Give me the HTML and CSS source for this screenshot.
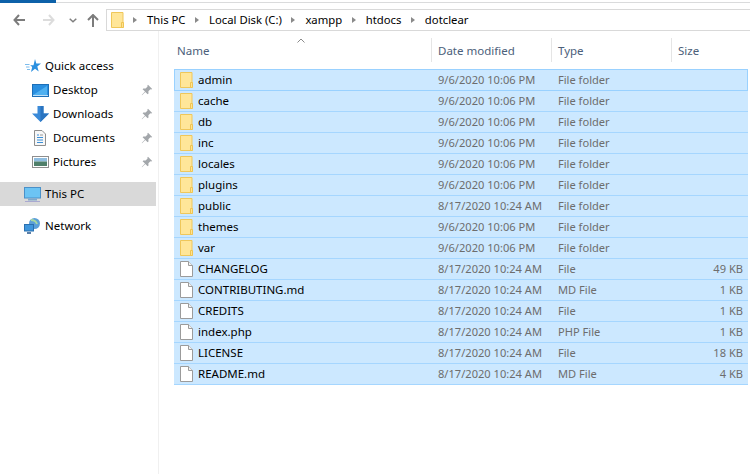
FILE: index.html
```html
<!DOCTYPE html>
<html lang="en">
<head>
    <meta charset="UTF-8">
    <title>dotclear</title>
    <link rel="stylesheet" href="styles.css">
</head>
<body>
    <svg class="defs" width="0" height="0">
        <symbol id="folder" viewBox="0 0 13 16">
            <path d="M.5.5h11.500v15H.5z" fill="#ffe699" stroke="#efc75a"/>
            <path d="M10.500 10.500h2v5h-2z" fill="#ffe38f" stroke="#efc453"/>
        </symbol>
        <symbol id="file" viewBox="0 0 13 16">
            <path d="M.5.5h8l4 4v11H.5z" fill="#fff" stroke="#9b9b9b"/>
            <path d="M8.500.5v4h4" fill="#f2f2f2" stroke="#9b9b9b"/>
        </symbol>
        <symbol id="pin" viewBox="0 0 12 12">
            <path d="M7 .8l4.200 4.200-1 .6-.8-.3-2 2 .1 2.200-.8.800L4.300 7.900 1 11.200l-.3-.3L4 7.600 1.600 5.300l.8-.8 2.200.1 2-2-.3-.8z" fill="#a3a7ab"/>
        </symbol>
    </svg>

    <div class="ribbon"><div class="ribbon-tab"></div></div>

    <div class="toolbar">
        <div class="nav-buttons">
            <svg width="12" height="12" viewBox="0 0 12 12"><path d="M6 1L1.500 6 6 11M2 6h10" fill="none" stroke="#7c7c7c" stroke-width="2"/></svg>
            <svg class="nav-forward" width="12" height="12" viewBox="0 0 12 12"><path d="M6 1l4.500 5L6 11M10 6H0" fill="none" stroke="#dcdcdc" stroke-width="2"/></svg>
            <svg class="nav-down" width="8" height="5" viewBox="0 0 8 5"><path d="M.7.7L4 3.800 7.300.7" fill="none" stroke="#808080" stroke-width="1.500"/></svg>
            <svg class="nav-up" width="12" height="13" viewBox="0 0 12 13"><path d="M1 6l5-5 5 5M6 1.500V13" fill="none" stroke="#7c7c7c" stroke-width="2"/></svg>
        </div>
        <div class="address">
            <svg class="address-icon" width="13" height="16"><use href="#folder"/></svg>
            <span class="crumb-sep"></span><span>This PC</span>
            <span class="crumb-sep"></span><span>Local Disk (C:)</span>
            <span class="crumb-sep"></span><span>xampp</span>
            <span class="crumb-sep"></span><span>htdocs</span>
            <span class="crumb-sep"></span><span>dotclear</span>
        </div>
    </div>

    <div class="main">
        <nav class="sidebar">
            <div class="nav-item top">
                <svg width="17" height="14" viewBox="0 0 17 14"><path d="M11 0l1.300 4.500H17l-3.700 3 1.400 5L11 9.800 7 13l1.200-5-2-1.800h3.300z" fill="#2b90e0"/><path d="M1 5.500h4.500M2 8h3.500M3 10.500h3" stroke="#7dbcec"/></svg>
                Quick access
            </div>
            <div class="nav-item sub">
                <svg width="17" height="13" viewBox="0 0 17 13"><rect x=".5" y=".5" width="16" height="12" fill="#2a8fe0" stroke="#1c6fb8"/><path d="M1 11L15 2v9z" fill="#4fb0f0"/><path d="M1 11.500h15" stroke="#bfe0f8"/></svg>
                Desktop
                <svg class="pin" width="12" height="12"><use href="#pin"/></svg>
            </div>
            <div class="nav-item sub">
                <svg width="17" height="16" viewBox="0 0 17 16"><path d="M5.500 0h6v7.500H17L8.500 16 0 7.500h5.500z" fill="#3a8ad8"/><path d="M8.500 0h3v7.500H17L8.500 16z" fill="#2a74c0"/></svg>
                Downloads
                <svg class="pin" width="12" height="12"><use href="#pin"/></svg>
            </div>
            <div class="nav-item sub">
                <svg class="doc-icon" width="12" height="16" viewBox="0 0 12 16"><path d="M.5.500h7.500l3.500 3.500v11.500H.5z" fill="#f7f7f7" stroke="#8e8e8e"/><path d="M3 5h2M3 7.500h6M3 10h6M3 12.500h6" stroke="#3a8fd8"/><path d="M6 5h3" stroke="#9a9a9a"/></svg>
                Documents
                <svg class="pin" width="12" height="12"><use href="#pin"/></svg>
            </div>
            <div class="nav-item sub">
                <svg width="17" height="12" viewBox="0 0 17 12"><rect x=".5" y=".5" width="16" height="11" fill="#fff" stroke="#8e8e8e"/><path d="M2 2h13v3.500H2z" fill="#8fbde0"/><path d="M2 5.500h13V10H2z" fill="#4f7f6a"/></svg>
                Pictures
                <svg class="pin" width="12" height="12"><use href="#pin"/></svg>
            </div>
            <div class="nav-item top section active">
                <svg width="17" height="15" viewBox="0 0 17 15"><rect x=".5" y=".5" width="16" height="10.500" fill="#6cc4f4" stroke="#4a90c8"/><path d="M4 12.500h9" stroke="#7fa8cc" stroke-width="2"/><path d="M1 14.500h15" stroke="#a9a9d0"/></svg>
                This PC
            </div>
            <div class="nav-item top section">
                <svg width="17" height="16" viewBox="0 0 17 16"><circle cx="10.500" cy="5.500" r="5.500" fill="#5b9fd8"/><path d="M7 2c3 0 5 1 6 4" stroke="#a8d8a0" stroke-width="2" fill="none"/><rect x=".5" y="6.500" width="9" height="6.500" fill="#3f96dc" stroke="#2a70b0"/><path d="M3 15h4" stroke="#5a7fa8" stroke-width="2"/></svg>
                Network
            </div>
        </nav>

        <section class="files">
            <div class="header">
                <div class="col-head">Name<svg class="sort-arrow" width="8" height="5" viewBox="0 0 8 5"><path d="M.5 4.500L4 1l3.500 3.500" fill="none" stroke="#8a8a8a"/></svg></div>
                <div class="col-head">Date modified</div>
                <div class="col-head">Type</div>
                <div class="col-head">Size</div>
            </div>

            <div class="row first"><div class="name"><svg width="13" height="16"><use href="#folder"/></svg>admin</div><div>9/6/2020 10:06 PM</div><div>File folder</div><div class="size"></div></div>
            <div class="row"><div class="name"><svg width="13" height="16"><use href="#folder"/></svg>cache</div><div>9/6/2020 10:06 PM</div><div>File folder</div><div class="size"></div></div>
            <div class="row"><div class="name"><svg width="13" height="16"><use href="#folder"/></svg>db</div><div>9/6/2020 10:06 PM</div><div>File folder</div><div class="size"></div></div>
            <div class="row"><div class="name"><svg width="13" height="16"><use href="#folder"/></svg>inc</div><div>9/6/2020 10:06 PM</div><div>File folder</div><div class="size"></div></div>
            <div class="row"><div class="name"><svg width="13" height="16"><use href="#folder"/></svg>locales</div><div>9/6/2020 10:06 PM</div><div>File folder</div><div class="size"></div></div>
            <div class="row"><div class="name"><svg width="13" height="16"><use href="#folder"/></svg>plugins</div><div>9/6/2020 10:06 PM</div><div>File folder</div><div class="size"></div></div>
            <div class="row"><div class="name"><svg width="13" height="16"><use href="#folder"/></svg>public</div><div>8/17/2020 10:24 AM</div><div>File folder</div><div class="size"></div></div>
            <div class="row"><div class="name"><svg width="13" height="16"><use href="#folder"/></svg>themes</div><div>9/6/2020 10:06 PM</div><div>File folder</div><div class="size"></div></div>
            <div class="row"><div class="name"><svg width="13" height="16"><use href="#folder"/></svg>var</div><div>9/6/2020 10:06 PM</div><div>File folder</div><div class="size"></div></div>
            <div class="row"><div class="name"><svg width="13" height="16"><use href="#file"/></svg>CHANGELOG</div><div>8/17/2020 10:24 AM</div><div>File</div><div class="size">49 KB</div></div>
            <div class="row"><div class="name"><svg width="13" height="16"><use href="#file"/></svg>CONTRIBUTING.md</div><div>8/17/2020 10:24 AM</div><div>MD File</div><div class="size">1 KB</div></div>
            <div class="row"><div class="name"><svg width="13" height="16"><use href="#file"/></svg>CREDITS</div><div>8/17/2020 10:24 AM</div><div>File</div><div class="size">1 KB</div></div>
            <div class="row"><div class="name"><svg width="13" height="16"><use href="#file"/></svg>index.php</div><div>8/17/2020 10:24 AM</div><div>PHP File</div><div class="size">1 KB</div></div>
            <div class="row"><div class="name"><svg width="13" height="16"><use href="#file"/></svg>LICENSE</div><div>8/17/2020 10:24 AM</div><div>File</div><div class="size">18 KB</div></div>
            <div class="row"><div class="name"><svg width="13" height="16"><use href="#file"/></svg>README.md</div><div>8/17/2020 10:24 AM</div><div>MD File</div><div class="size">4 KB</div></div>
        </section>
    </div>
</body>
</html>
```

FILE: styles.css
```css
html, body {
    margin: 0;
    height: 100%;
    overflow: hidden;
}
body {
    font-family: "Noto Sans", "Open Sans", sans-serif;
    font-size: 11.5px;
    color: #000;
    background: #fff;
}
.defs {
    display: block;
}
.ribbon {
    height: 2px;
    border-bottom: 1px solid #dadbdc;
}
.ribbon-tab {
    width: 56px;
    height: 3px;
    background: #0d61a9;
}
.toolbar {
    display: flex;
    height: 28px;
    padding-top: 6px;
    box-sizing: border-box;
}
.nav-buttons {
    display: flex;
    align-items: center;
    width: 106px;
    padding-left: 13px;
    box-sizing: border-box;
    height: 22px;
}
.nav-forward {
    margin-left: 18px;
}
.nav-down {
    margin-left: 14px;
}
.nav-up {
    margin-left: 10px;
}
.address {
    flex: 1;
    display: flex;
    align-items: center;
    height: 22px;
    box-sizing: border-box;
    border: 1px solid #d9d9d9;
    border-right: none;
    padding-left: 4px;
    font-size: 11.3px;
    line-height: 20px;
}
.crumb-sep {
    width: 0;
    height: 0;
    margin: 0 10px 0 9.5px;
    border-left: 4px solid #8a8a8a;
    border-top: 3px solid transparent;
    border-bottom: 3px solid transparent;
}
.address-icon + .crumb-sep {
    margin-left: 9px;
}
.main {
    display: flex;
    height: 444px;
}
.sidebar {
    width: 159px;
    flex: none;
    box-sizing: border-box;
    padding: 23px 0 0;
    border-right: 1px solid #f0f0f0;
}
.nav-item {
    position: relative;
    display: flex;
    align-items: center;
    width: 156px;
    height: 24px;
    padding-bottom: 2px;
    box-sizing: border-box;
}
.nav-item svg {
    margin-top: 2px;
}
.nav-item.top {
    padding-left: 24px;
    gap: 4px;
}
.nav-item.top svg {
    flex: none;
}
.nav-item.sub {
    padding-left: 32px;
    gap: 4px;
}
.nav-item.section {
    margin-top: 8px;
}
.nav-item.active {
    background: #d9d9d9;
}
.nav-item .doc-icon {
    margin: 2px 3px 0 2px;
}
.nav-item .pin {
    position: absolute;
    right: 3px;
    top: 6px;
    margin: 0;
}
.files {
    flex: 1;
    padding: 7px 2px 0 15px;
    min-width: 0;
}
.header,
.row {
    display: grid;
    grid-template-columns: 258px 120px 120px 1fr;
}
.header {
    height: 31px;
    align-items: stretch;
}
.col-head {
    position: relative;
    display: flex;
    align-items: center;
    height: 24px;
    padding-left: 3px;
    border-right: 1px solid #e5e5e5;
    color: #4c607a;
    box-sizing: border-box;
}
.col-head:nth-child(n+2) {
    padding-left: 6px;
}
.col-head:last-child {
    border-right: none;
}
.sort-arrow {
    position: absolute;
    left: 123px;
    top: 0;
}
.row {
    height: 21px;
    box-sizing: border-box;
    align-items: center;
    background: #cce8ff;
    border-bottom: 1px solid #a5d6ff;
    color: #6d6d6d;
    font-size: 11.1px;
    line-height: 20px;
}
.row.first {
    height: 22px;
    grid-template-columns: 257px 120px 120px 1fr;
    border: 1px solid #99d1ff;
}
.row > div:nth-child(n+2) {
    padding-left: 6px;
}
.row .name {
    display: flex;
    align-items: center;
    gap: 5px;
    padding-left: 6px;
    color: #000;
    font-size: 11.5px;
}
.row.first .name {
    padding-left: 5px;
}
.row .size {
    padding-right: 5px;
    text-align: right;
}
```
